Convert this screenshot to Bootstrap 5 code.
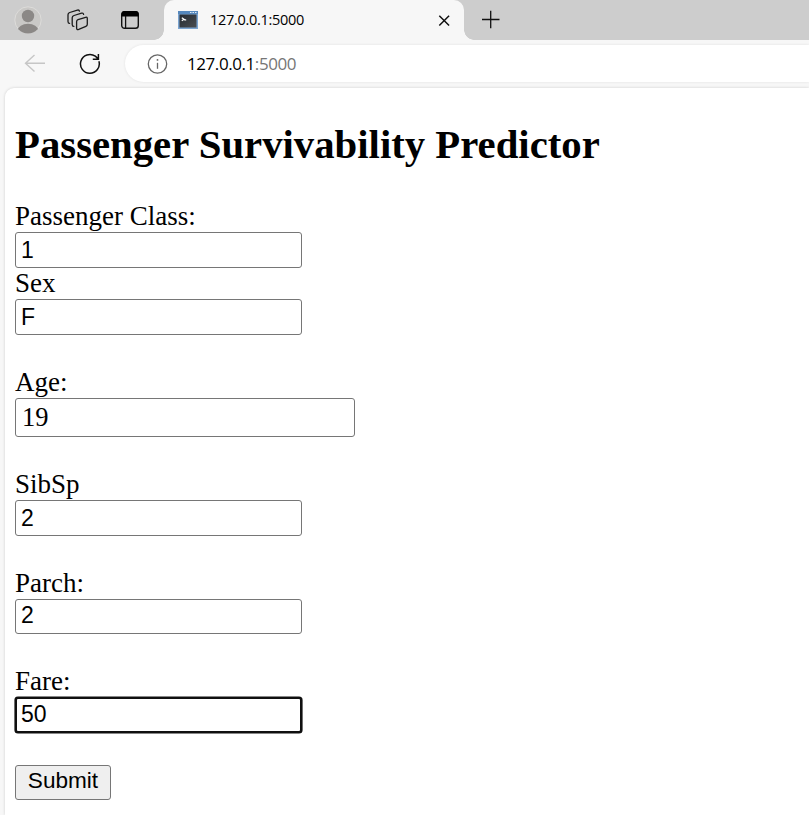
<!DOCTYPE html>
<html lang="en">
<head>
<meta charset="utf-8">
<meta name="viewport" content="width=device-width, initial-scale=1">
<title>127.0.0.1:5000</title>
<link href="https://cdn.jsdelivr.net/npm/bootstrap@5.3.0/dist/css/bootstrap.min.css" rel="stylesheet">
<style>
body { background: #f7f7f7; height: 815px; font-family: "Open Sans", "Noto Sans", sans-serif; color: #000; }
svg { display: block; flex: none; }
.tab-strip { height: 40px; background: #cdcdcd; }
.strip-left { width: 164px; height: 40px; padding-left: 14px; }
.window-icon { margin-left: 30px; }
.plus-icon { margin-left: 17px; }
.reload-icon { margin: 7px 0 0 32px; }
.active-tab { width: 300px; height: 40px; background: #f7f7f7; border-radius: 10px 10px 0 0; padding: 0 12px 0 14px; position: relative; font-size: 14.5px; letter-spacing: -.3px; }
/* concave feet on both sides of the selected tab */
.active-tab::before, .active-tab::after { content: ""; position: absolute; bottom: 0; width: 10px; height: 10px; }
.active-tab::before { left: -10px; background: radial-gradient(circle at 0 0, transparent 9.5px, #f7f7f7 10px); }
.active-tab::after { right: -10px; background: radial-gradient(circle at 100% 0, transparent 9.5px, #f7f7f7 10px); }
.toolbar { height: 48px; padding: 5px 0 5px 24px; }
.address { height: 37px; background: #fff; border-radius: 19px 0 0 19px; margin-left: 24px; padding-left: 22px; box-shadow: 0 0 3px rgba(0,0,0,.09); font-size: 17px; letter-spacing: -.43px; }
.address-text { margin-left: 18px; }
.port { color: #767676; }
.viewport { height: 727px; margin-left: 5px; background: #fff; border-radius: 9px 0 0 0; box-shadow: 0 0 3px rgba(0,0,0,.17); padding: 33px 10px 0; font-family: "Liberation Serif", "Times New Roman", serif; }
.page-title { font-size: 40.75px; line-height: 48px; font-weight: 700; margin: 0 0 32px; white-space: nowrap; }
.field { margin-bottom: 32px; }
.field-tight { margin-bottom: 0; }
.field label { display: block; height: 31px; line-height: 31px; font-size: 27px; }
.field input { display: block; width: 287px; height: 36px; border: 1px solid #767676; border-radius: 3px; padding: 1px 5px 0; font: 23px "Liberation Sans", Arial, sans-serif; color: #000; background: #fff; outline: 0; }
.field .age-input { width: 340px; height: 39px; padding: 0 6px; font: 26.5px "Liberation Serif", "Times New Roman", serif; }
.field .short-input { height: 35px; padding: 0 5px 3px; }
.field .focused-input { border: 2px solid #101010; box-shadow: 0 0 0 .6px #101010; padding: 0 4px 1px; }
.submit-btn { width: 96px; height: 35px; border: 1px solid #767676; border-radius: 3px; background: #efefef; color: #000; padding: 0 0 3px; font: 22.6px "Liberation Sans", Arial, sans-serif; display: block; }
</style>
</head>
<body class="overflow-hidden">
<header>
  <div class="tab-strip d-flex">
    <div class="strip-left d-flex align-items-center">
      <svg width="28" height="28" viewBox="0 0 28 28"><defs><clipPath id="face"><circle cx="14" cy="14" r="13.4"/></clipPath></defs><circle cx="14" cy="14" r="13.2" fill="#c9c8c6" stroke="#dddcda" stroke-width="1"/><g clip-path="url(#face)" fill="#8b8886"><circle cx="14" cy="10" r="6.2"/><ellipse cx="14" cy="24.3" rx="10.2" ry="6.5"/></g></svg>
      <svg class="ms-4" width="24" height="24" viewBox="0 0 24 24" fill="none" stroke="#1b1b1b" stroke-width="1.300" stroke-linejoin="round" stroke-linecap="round"><path d="m12 11.600 7.600-2.300q1.700-.4 1.700 1.200v5.800q0 1.500-1.400 2l-7.200 3q-2.100.8-2.100-1.300v-6.200q0-1.700 1.400-2.200Z"/><path d="M17.600 6.400q-.3-1.700-2-1.200L8 7.500Q6.200 8.100 6.200 9.800v6.600q0 1.900 1.700 1.900"/><path d="M13.400 3.200q-.4-1.600-2-1.100L3.700 4.500Q2 5.100 2 6.800v6.600q0 1.900 1.600 1.900"/></svg>
      <svg class="window-icon" width="20" height="20" viewBox="0 0 20 20"><rect x="1.700" y="1.700" width="16.600" height="16.600" rx="2.800" fill="none" stroke="#111" stroke-width="1.400"/><path d="M1.500 6.500V4q0-3 3-3h11q3 0 3 3v2.500Z" fill="#000"/><path d="M5.600 6v12" stroke="#111" stroke-width="1.300"/></svg>
    </div>
    <div class="active-tab d-flex align-items-center">
      <svg width="20" height="18" viewBox="0 0 20 18"><defs><linearGradient id="screen" x2="1" y2="1"><stop stop-color="#252b32"/><stop offset="1" stop-color="#4a4d50"/></linearGradient></defs><path d="M0 0h20v18H0z" fill="#7ba4d0"/><path d="M0 0h20v3H0z" fill="#5688bd"/><path d="M12 1.500h1.500M14.500 1.500H16M17 1.500h1.500" stroke="#dceaf7"/><path d="M1.500 3.500h17v13h-17z" fill="url(#screen)"/><path d="m3.800 6.700 2.200 1.500-2.200 1.500M6.200 8.800h2" fill="none" stroke="#fff" stroke-width="1.200"/></svg>
      <span class="ms-2 ps-1">127.0.0.1:5000</span>
      <svg class="ms-auto" width="16" height="16" viewBox="0 0 16 16" stroke="#111" stroke-width="1.500"><path d="m3.300 3.700 9.800 9.800M13.100 3.700l-9.800 9.800"/></svg>
    </div>
    <svg class="align-self-center plus-icon" width="20" height="20" viewBox="0 0 20 20" stroke="#111" stroke-width="1.300"><path d="M1 9.500h17.500M9.700.800v17.400"/></svg>
  </div>
  <div class="toolbar d-flex">
    <svg class="mt-2" width="22" height="22" viewBox="0 0 22 22" fill="none" stroke="#c6c6c6" stroke-width="1.400"><path d="M10.500 2 1.500 10.300l9 8.300M1.500 10.300H21"/></svg>
    <svg class="reload-icon" width="23" height="24" viewBox="0 0 23 24" fill="none" stroke="#111" stroke-width="1.500"><path d="M20.900 9.200A9.400 9.400 0 1 1 17.300 4.200L20 6.600M20.400 2v5.300h-5.600"/></svg>
    <div class="address d-flex align-items-center flex-grow-1">
      <svg width="22" height="22" viewBox="0 0 22 22" fill="none" stroke="#666" stroke-width="1.300"><circle cx="10.500" cy="11" r="9.200"/><path d="M10.500 9.800v6"/><circle cx="10.500" cy="6.900" r=".9" fill="#666" stroke="none"/></svg>
      <span class="address-text">127.0.0.1<span class="port">:5000</span></span>
    </div>
  </div>
</header>
<main class="viewport">
  <h1 class="page-title">Passenger Survivability Predictor</h1>
  <form>
    <div class="field field-tight"><label for="pclass">Passenger Class:</label><input id="pclass" type="text" value="1"></div>
    <div class="field"><label for="sex">Sex</label><input id="sex" type="text" value="F"></div>
    <div class="field"><label for="age">Age:</label><input id="age" class="age-input" type="text" value="19"></div>
    <div class="field"><label for="sibsp">SibSp</label><input id="sibsp" type="text" value="2"></div>
    <div class="field"><label for="parch">Parch:</label><input id="parch" class="short-input" type="text" value="2"></div>
    <div class="field"><label for="fare">Fare:</label><input id="fare" class="focused-input" type="text" value="50"></div>
    <button class="submit-btn" type="button">Submit</button>
  </form>
</main>
<script src="https://cdn.jsdelivr.net/npm/bootstrap@5.3.0/dist/js/bootstrap.bundle.min.js"></script>
</body>
</html>
